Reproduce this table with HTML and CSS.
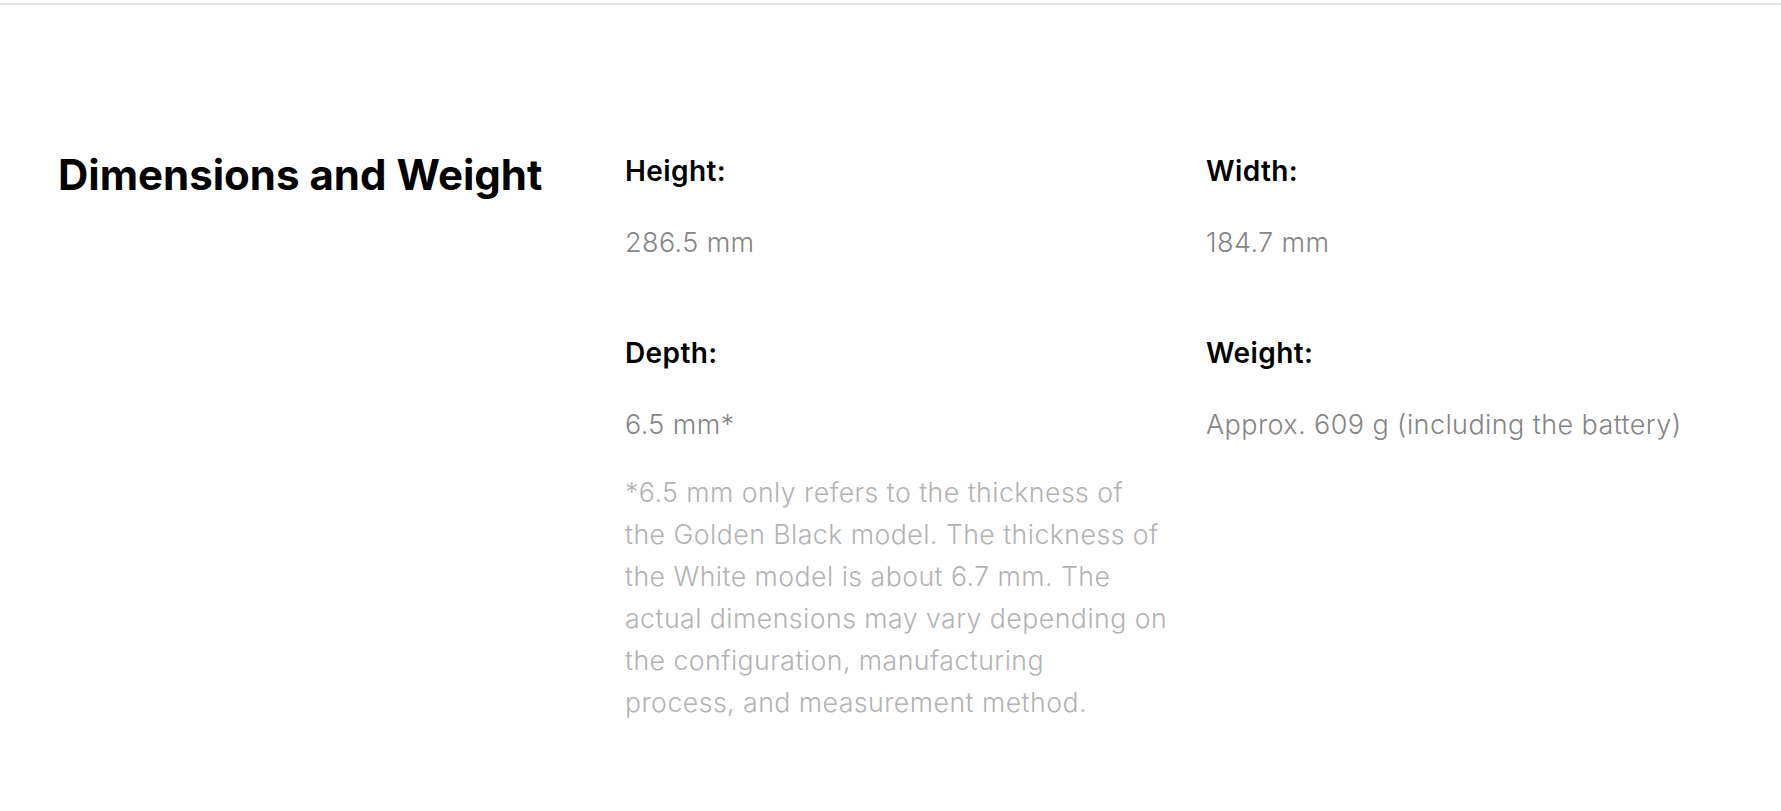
FILE: index.html
```html
<!DOCTYPE html>
<html lang="en">
<head>
<meta charset="utf-8">
<title>Dimensions and Weight</title>
<link rel="stylesheet" href="styles.css">
</head>
<body>
<div class="topline"></div>
<section class="specs">
  <h2 class="specs-title">Dimensions and Weight</h2>
  <div class="specs-grid">
    <div class="item">
      <div class="label">Height:</div>
      <div class="value">286.5 mm</div>
    </div>
    <div class="item">
      <div class="label">Width:</div>
      <div class="value">184.7 mm</div>
    </div>
    <div class="item">
      <div class="label">Depth:</div>
      <div class="value">6.5 mm*</div>
      <p class="note">*6.5 mm only refers to the thickness of<br>the Golden Black model. The thickness of<br>the White model is about 6.7 mm. The<br>actual dimensions may vary depending on<br>the configuration, manufacturing<br>process, and measurement method.</p>
    </div>
    <div class="item">
      <div class="label">Weight:</div>
      <div class="value">Approx. 609 g (including the battery)</div>
    </div>
  </div>
</section>
</body>
</html>
```

FILE: styles.css
```css
html, body {
  margin: 0;
  padding: 0;
  background: #ffffff;
}
body {
  font-family: Inter, "Liberation Sans", sans-serif;
  color: #000;
}
.topline {
  margin-top: 3px;
  height: 2px;
  background: #e6e6e6;
}
.specs {
  display: grid;
  grid-template-columns: 567px 1fr;
  padding: 149px 26px 0 58px;
}
.specs-title {
  margin: 0;
  font-size: 42px;
  line-height: 42px;
  font-weight: 700;
  letter-spacing: 0;
}
.specs-grid {
  display: grid;
  grid-template-columns: 549px 549px;
  column-gap: 32px;
  row-gap: 74px;
}
.label {
  font-size: 28px;
  line-height: 34px;
  font-weight: 600;
  letter-spacing: 0.4px;
}
.value {
  margin-top: 36px;
  font-size: 27px;
  line-height: 38px;
  font-weight: 300;
  letter-spacing: 0.4px;
  color: #858585;
}
.note {
  margin: 27px 0 0;
  font-size: 26.7px;
  line-height: 42px;
  font-weight: 300;
  letter-spacing: 0.45px;
  white-space: nowrap;
  color: #b3b3b3;
}
```
